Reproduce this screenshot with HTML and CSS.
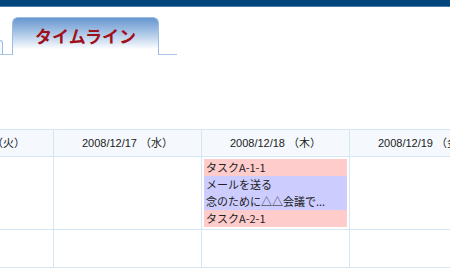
FILE: index.html
```html
<!DOCTYPE html>
<html lang="ja">
<head>
<meta charset="UTF-8">
<title>タイムライン</title>
<link rel="stylesheet" href="styles.css">
</head>
<body>
<div class="topbar"></div>

<div class="tabs">
  <div class="tab tab-prev"></div>
  <div class="tab tab-active">タイムライン</div>
</div>

<div class="timeline">
  <table class="calendar">
    <tr class="head">
      <th>2008/12/16 （火）</th>
      <th>2008/12/17 （水）</th>
      <th>2008/12/18 （木）</th>
      <th>2008/12/19 （金）</th>
    </tr>
    <tr class="week">
      <td></td>
      <td></td>
      <td>
        <div class="event task">タスクA-1-1</div>
        <div class="event todo">メールを送る</div>
        <div class="event todo">念のために△△会議で...</div>
        <div class="event task">タスクA-2-1</div>
      </td>
      <td></td>
    </tr>
    <tr class="week short">
      <td></td>
      <td></td>
      <td></td>
      <td></td>
    </tr>
  </table>
</div>
</body>
</html>
```

FILE: styles.css
```css
body {
  margin: 0;
  padding: 0;
  background: #ffffff;
  font-family: "Liberation Sans", "Noto Sans CJK JP", sans-serif;
  color: #222222;
  overflow: hidden;
}

.topbar {
  height: 6px;
  background-color: #00457b;
  border-bottom: 1px solid #4a7aa8;
}

.tabs {
  display: flex;
  align-items: flex-end;
  width: 177px;
  height: 37px;
  margin-top: 10px;
  border-bottom: 1px solid #a9c7e4;
}

.tab {
  box-sizing: border-box;
  border: 1px solid #9dbde0;
  border-bottom: none;
}

.tab-prev {
  width: 3px;
  height: 14px;
  border-left: none;
  border-top-right-radius: 4px;
  background-color: #f6f9fd;
}

.tab-active {
  width: 147px;
  height: 38px;
  margin-left: 9px;
  margin-bottom: -1px; /* sit over the strip line */
  border-radius: 6px 6px 0 0;
  background: linear-gradient(to bottom, #6796cf 0%, #a9c5e6 40%, #ffffff 85%);
  color: #a0101b;
  font-family: "Noto Sans CJK JP", sans-serif;
  font-weight: bold;
  font-size: 17px;
  line-height: 36px;
  text-align: center;
}

.timeline {
  width: 600px;
  margin-top: 74px;
  margin-left: -95px; /* scrolled to the middle of the week */
}

.calendar {
  width: 593px;
  border-collapse: collapse;
  table-layout: fixed;
}

.calendar th,
.calendar td {
  width: 143px;
  border: 1px solid #d6e6f5;
  padding: 2px;
  vertical-align: top;
}

.calendar th {
  height: 22px;
  background-color: #f5f9fd;
  font-weight: normal;
  font-size: 11px;
  line-height: 22px;
  text-align: center;
  color: #222222;
}

.week td {
  height: 68px;
}

.week.short td {
  height: 33px;
}

.event {
  height: 17px;
  padding-left: 2px;
  font-family: "Noto Sans CJK JP", sans-serif;
  font-size: 11px;
  line-height: 17px;
  white-space: nowrap;
  overflow: hidden;
}

.task {
  background-color: #ffcccc;
}

.todo {
  background-color: #ccccff;
}
```
